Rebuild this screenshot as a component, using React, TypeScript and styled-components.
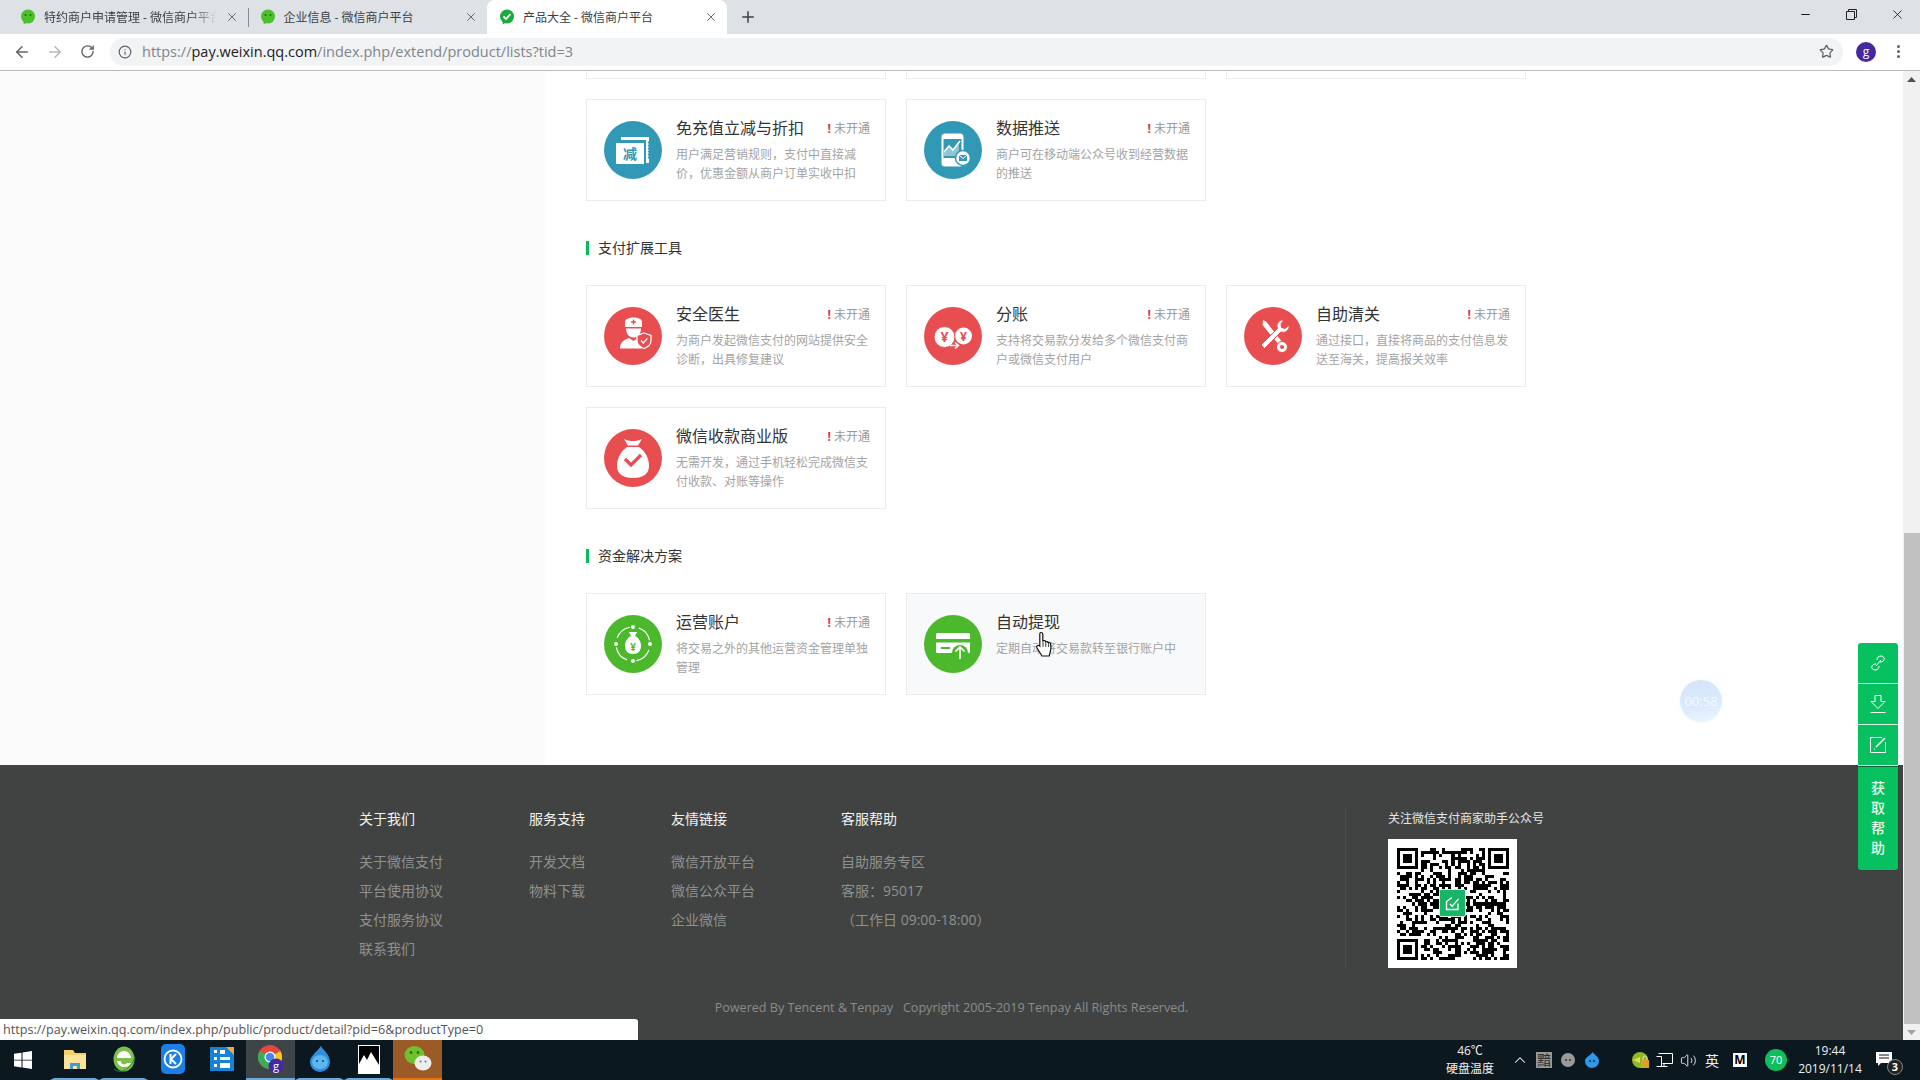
import { ReactNode } from 'react';
import styled, { createGlobalStyle } from 'styled-components';
import { ArrowLeft, ArrowRight, ChevronUp, Info, Minus, Plus, RotateCw, Star, Volume2, X } from 'lucide-react';

const FONT = '"Open Sans", "Noto Sans CJK SC", sans-serif';
const BLUE = '#3199b6';
const RED = '#e84d50';
const GREEN = '#4cb82c';

/* ---------- icons ---------- */

function Disc({ color, children }: { color: string; children: ReactNode }) {
  return (
    <svg width="58" height="58" viewBox="0 0 58 58" style={{ flexShrink: 0 }}>
      <circle cx="29" cy="29" r="29" fill={color} />
      {children}
    </svg>
  );
}

const ReduceIcon = (
  <Disc color={BLUE}>
    <path d="M17 16h28v4l-1.500 1.500 1.500 1.500-1.500 1.500 1.500 1.500-1.500 1.500 1.500 1.500-1.500 1.500 1.500 1.500-1.500 1.500 1.500 1.500-1.500 1.500 1.500 1.500v4h-3V19H17z" fill="#fff" />
    <rect x="12" y="22" width="28" height="21" fill="#fff" />
    <text x="26" y="38" fontSize="14" fontWeight="700" textAnchor="middle" fill={BLUE} fontFamily={FONT}>减</text>
  </Disc>
);

const PushIcon = (
  <Disc color={BLUE}>
    <rect x="18.500" y="13.500" width="20" height="31" rx="2.500" fill={BLUE} stroke="#fff" strokeWidth="2" />
    <rect x="19" y="14" width="19" height="4" fill="#fff" />
    <rect x="19" y="37" width="19" height="7" fill="#fff" />
    <path d="M20 35v-5l5-5 4 4 6-8v14z" fill="#fff" opacity=".45" />
    <path d="M20 31l5-6 4 4 7-9" fill="none" stroke="#fff" strokeWidth="1.600" />
    <circle cx="39" cy="37" r="7.500" fill="#fff" stroke={BLUE} strokeWidth="1.500" />
    <rect x="35" y="34" width="8" height="6" fill={BLUE} />
    <path d="M35 34l4 3.500 4-3.500" fill="none" stroke="#fff" strokeWidth="1" />
  </Disc>
);

const DoctorIcon = (
  <Disc color={RED}>
    <path d="M21 20v-5c0-3 4-4.500 8.500-4.500S38 12 38 15v5z" fill="#fff" />
    <path d="M29.500 12.500v5M27 15h5" stroke={RED} strokeWidth="1.400" />
    <path d="M22 21.500h15c0 5-3 9-7.500 9s-7.500-4-7.500-9z" fill="#fff" />
    <path d="M16 41.500c0-6 4-9 9-10.500l4.500 3 4.500-3c1.500.5 3 1.200 4 2v8.500z" fill="#fff" />
    <path d="M40 26l7 2.500v5c0 4-3 6.500-7 8-4-1.500-7-4-7-8v-5z" fill={RED} stroke="#fff" strokeWidth="1.300" />
    <path d="M37 33.500l2.300 2.500 4-4.500" fill="none" stroke="#fff" strokeWidth="1.300" />
  </Disc>
);

const SplitIcon = (
  <Disc color={RED}>
    <circle cx="39.500" cy="29" r="8.500" fill="#fff" />
    <circle cx="20.500" cy="30" r="10.500" fill="#fff" stroke={RED} strokeWidth="1" />
    <text x="20.500" y="35" fontSize="14" fontWeight="700" textAnchor="middle" fill={RED} fontFamily={FONT}>¥</text>
    <text x="39.500" y="33.500" fontSize="12" fontWeight="700" textAnchor="middle" fill={RED} fontFamily={FONT}>¥</text>
    <path d="M26 38.500h8M31 35.500l3.500 3-3.500 3" fill="none" stroke="#fff" strokeWidth="1.500" />
  </Disc>
);

const CustomsIcon = (
  <Disc color={RED}>
    <path d="M19 13l3 1.500 17 21.500-3 3-17.500-21z" fill="#fff" />
    <path d="M40 13a6 6 0 0 0-6.500 8.500L17 38l3.500 3.500L37 25a6 6 0 0 0 8-7l-4 3.500-3.500-1-.5-3.500z" fill="#fff" stroke={RED} strokeWidth="1" />
    <circle cx="38" cy="40" r="5.500" fill="#fff" stroke={RED} strokeWidth="1" />
    <circle cx="38" cy="40" r="2" fill={RED} />
  </Disc>
);

const BagIcon = (
  <Disc color={RED}>
    <path d="M20 10c3 1.500 6 2 9 2s6-.5 9-2l-4 6.500h-10z" fill="#fff" />
    <path d="M23 18h12c6 4 10 11 10 19 0 8-6 12-16 12s-16-4-16-12c0-8 4-15 10-19z" fill="#fff" />
    <path d="M21 30l6 6 10-10" fill="none" stroke={RED} strokeWidth="3.200" />
  </Disc>
);

const OperateIcon = (
  <Disc color={GREEN}>
    <circle cx="29" cy="29" r="17" fill="none" stroke="#fff" strokeWidth="1.200" strokeDasharray="17 9.700" transform="rotate(-70 29 29)" />
    <circle cx="29" cy="12" r="2" fill="#fff" />
    <circle cx="12" cy="29" r="2" fill="#fff" />
    <circle cx="46" cy="29" r="2" fill="#fff" />
    <circle cx="29" cy="46" r="2" fill="#fff" />
    <path d="M25 17h8l-2 4c4 2 6 6 6 10 0 5-3 8-8 8s-8-3-8-8c0-4 2-8 6-10z" fill="#fff" />
    <text x="29" y="36" fontSize="10" fontWeight="700" textAnchor="middle" fill={GREEN} fontFamily={FONT}>¥</text>
  </Disc>
);

const WithdrawIcon = (
  <Disc color={GREEN}>
    <rect x="12" y="18" width="34" height="20" rx="1.500" fill="#fff" />
    <rect x="12" y="24" width="34" height="3.500" fill={GREEN} />
    <rect x="17" y="32" width="9" height="2" fill={GREEN} />
    <circle cx="36" cy="38" r="8" fill={GREEN} />
    <path d="M36 44v-12M31.500 36.500l4.500-4.500 4.500 4.500" fill="none" stroke="#fff" strokeWidth="1.600" />
  </Disc>
);

function HandCursor() {
  return (
    <svg width="20" height="26" viewBox="0 0 20 26">
      <path
        d="M6 1.500c1 0 1.800.8 1.800 1.800V10l1-.3c1-.2 1.800.2 2 1 1-.4 2-.1 2.300.8 1-.4 2.200 0 2.400 1 .8 3 .6 6.500-.5 9.500l-.8 3H7l-5-8c-.6-1-.4-2 .4-2.500.8-.5 1.600-.2 2.400.6V3.300c0-1 .3-1.800 1.200-1.800z"
        fill="#fff"
        stroke="#111"
        strokeWidth="1.200"
      />
      <path d="M8 11v5M10.800 11v5M13.600 12v4" stroke="#111" strokeWidth=".8" />
    </svg>
  );
}

function WechatFavicon({ check }: { check?: boolean }) {
  return (
    <svg width="16" height="16" viewBox="0 0 16 16">
      <circle cx="8" cy="7.500" r="7" fill={check ? '#1aab3b' : '#4cc02b'} />
      <path d="M4 12l-.5 3.500L8 13z" fill={check ? '#1aab3b' : '#4cc02b'} />
      {check ? (
        <path d="M4.500 7.500l2.500 2.500 4.500-5" fill="none" stroke="#fff" strokeWidth="1.800" />
      ) : (
        <g fill="#1f6b12">
          <circle cx="5.500" cy="6" r="1" />
          <circle cx="10.500" cy="6" r="1" />
        </g>
      )}
    </svg>
  );
}

/* pseudo random QR modules, with the three finder squares drawn on top */
function qrPath() {
  const size = 37;
  let seed = 20191114;
  let d = '';
  const inFinder = (x: number, y: number) => (x < 8 && y < 8) || (x > 28 && y < 8) || (x < 8 && y > 28);
  for (let y = 0; y < size; y++) {
    for (let x = 0; x < size; x++) {
      seed = (seed * 1103515245 + 12345) & 0x7fffffff;
      if (!inFinder(x, y) && (seed >> 16) % 100 < 52) d += `M${x} ${y}h1v1h-1z`;
    }
  }
  [
    [0, 0],
    [30, 0],
    [0, 30],
  ].forEach(([x, y]) => {
    d += `M${x} ${y}h7v7h-7zM${x + 1} ${y + 1}v5h5v-5zM${x + 2} ${y + 2}h3v3h-3z`;
  });
  return d;
}

function QrCode() {
  return (
    <svg width="112" height="112" viewBox="0 0 37 37" shapeRendering="crispEdges">
      <path d={qrPath()} fill="#000" fillRule="evenodd" />
    </svg>
  );
}

/* ---------- data ---------- */

type Product = { title: string; desc: string; icon: ReactNode; closed?: boolean };

const PROMO: Product[] = [
  { title: '免充值立减与折扣', desc: '用户满足营销规则\uFF0C支付中直接减价\uFF0C优惠金额从商户订单实收中扣', icon: ReduceIcon, closed: true },
  { title: '数据推送', desc: '商户可在移动端公众号收到经营数据的推送', icon: PushIcon, closed: true },
];

const TOOLS: Product[] = [
  { title: '安全医生', desc: '为商户发起微信支付的网站提供安全诊断\uFF0C出具修复建议', icon: DoctorIcon, closed: true },
  { title: '分账', desc: '支持将交易款分发给多个微信支付商户或微信支付用户', icon: SplitIcon, closed: true },
  { title: '自助清关', desc: '通过接口\uFF0C直接将商品的支付信息发送至海关\uFF0C提高报关效率', icon: CustomsIcon, closed: true },
  { title: '微信收款商业版', desc: '无需开发\uFF0C通过手机轻松完成微信支付收款\u3001对账等操作', icon: BagIcon, closed: true },
];

const FOOTER_COLUMNS = [
  { width: 170, title: '关于我们', links: ['关于微信支付', '平台使用协议', '支付服务协议', '联系我们'] },
  { width: 142, title: '服务支持', links: ['开发文档', '物料下载'] },
  { width: 170, title: '友情链接', links: ['微信开放平台', '微信公众平台', '企业微信'] },
  { width: 504, title: '客服帮助', links: ['自助服务专区', '客服\uFF1A95017', '\uFF08工作日 09:00-18:00\uFF09'] },
];

/* ---------- component ---------- */

function ProductCard({ product, hovered, children }: { product: Product; hovered?: boolean; children?: ReactNode }) {
  return (
    <Card $hovered={hovered}>
      {product.icon}
      <CardBody>
        <CardHead>
          <CardTitle>{product.title}</CardTitle>
          {product.closed && (
            <Status>
              <b>!</b>未开通
            </Status>
          )}
        </CardHead>
        <CardDesc>{product.desc}</CardDesc>
      </CardBody>
      {children}
    </Card>
  );
}

function App() {
  return (
    <Screen>
      <GlobalStyle />

      <TabStrip>
        <Tab>
          <WechatFavicon />
          <TabTitle $fade>特约商户申请管理 - 微信商户平台</TabTitle>
          <X size={14} strokeWidth={1.600} color="#5f6368" />
        </Tab>
        <Tab $divider>
          <WechatFavicon />
          <TabTitle>企业信息 - 微信商户平台</TabTitle>
          <X size={14} strokeWidth={1.600} color="#5f6368" />
        </Tab>
        <Tab $active>
          <WechatFavicon check />
          <TabTitle>产品大全 - 微信商户平台</TabTitle>
          <X size={14} strokeWidth={1.600} color="#5f6368" />
        </Tab>
        <NewTab>
          <Plus size={18} color="#3c4043" />
        </NewTab>
        <WindowControls>
          <WindowButton>
            <Minus size={13} strokeWidth={1.800} color="#111" />
          </WindowButton>
          <WindowButton>
            <svg width="11" height="11" viewBox="0 0 11 11" fill="none" stroke="#222">
              <path d="M.5 2.500h8v8h-8zM2.500 2.500v-2h8v8h-2" />
            </svg>
          </WindowButton>
          <WindowButton>
            <X size={15} strokeWidth={1.300} color="#111" />
          </WindowButton>
        </WindowControls>
      </TabStrip>

      <Toolbar>
        <NavButton>
          <ArrowLeft size={18} color="#5f6368" strokeWidth={2} />
        </NavButton>
        <NavButton>
          <ArrowRight size={18} color="#b4b7ba" strokeWidth={2} />
        </NavButton>
        <NavButton>
          <RotateCw size={15} color="#5f6368" strokeWidth={2.200} />
        </NavButton>
        <Omnibox>
          <Info size={14} color="#5f6368" />
          <Url>
            https://<strong>pay.weixin.qq.com</strong>/index.php/extend/product/lists?tid=3
          </Url>
          <Star size={15} color="#5f6368" strokeWidth={2} />
        </Omnibox>
        <Avatar>g</Avatar>
        <Kebab>
          <i />
          <i />
          <i />
        </Kebab>
      </Toolbar>

      <PageRow>
        <PageScroll>
          <Main>
            <Sidebar />
            <Panel>
              <CutGrid>
                <Card />
                <Card />
                <Card />
              </CutGrid>
              <CardGrid>
                {PROMO.map((p) => (
                  <ProductCard key={p.title} product={p} />
                ))}
              </CardGrid>

              <SectionTitle>支付扩展工具</SectionTitle>
              <CardGrid>
                {TOOLS.map((p) => (
                  <ProductCard key={p.title} product={p} />
                ))}
              </CardGrid>

              <SectionTitle>资金解决方案</SectionTitle>
              <CardGrid>
                <ProductCard
                  product={{ title: '运营账户', desc: '将交易之外的其他运营资金管理单独管理', icon: OperateIcon, closed: true }}
                />
                <ProductCard
                  hovered
                  product={{ title: '自动提现', desc: '定期自动将交易款转至银行账户中', icon: WithdrawIcon }}
                >
                  <CursorSpot>
                    <HandCursor />
                  </CursorSpot>
                </ProductCard>
              </CardGrid>
            </Panel>
          </Main>

          <Footer>
            <FooterTop>
              {FOOTER_COLUMNS.map((col) => (
                <FooterColumn key={col.title} $width={col.width}>
                  <FooterHeading>{col.title}</FooterHeading>
                  <FooterLinks>
                    {col.links.map((l) => (
                      <li key={l}>{l}</li>
                    ))}
                  </FooterLinks>
                </FooterColumn>
              ))}
              <QrBlock>
                <QrTitle>关注微信支付商家助手公众号</QrTitle>
                <QrBox>
                  <QrCode />
                  <QrLogo>
                    <svg width="15" height="15" viewBox="0 0 15 15" fill="none" stroke="#fff" strokeWidth="1.300">
                      <path d="M7 1.500L1.500 5.500V13.500H13V7.500" />
                      <path d="M5 8l2.200 2.200L13.500 3" />
                    </svg>
                  </QrLogo>
                </QrBox>
              </QrBlock>
            </FooterTop>
            <Copyright>Powered By Tencent &amp; Tenpay &nbsp; Copyright 2005-2019 Tenpay All Rights Reserved.</Copyright>
          </Footer>
        </PageScroll>

        <Scrollbar>
          <ScrollArrow>
            <svg width="9" height="5" viewBox="0 0 9 5">
              <path d="M0 5l4.500-5L9 5z" fill="#505050" />
            </svg>
          </ScrollArrow>
          <ScrollTrack>
            <ScrollThumb />
          </ScrollTrack>
          <ScrollArrow>
            <svg width="9" height="5" viewBox="0 0 9 5">
              <path d="M0 0l4.500 5L9 0z" fill="#a3a3a3" />
            </svg>
          </ScrollArrow>
        </Scrollbar>
      </PageRow>

      <Taskbar>
        <StartButton>
          <svg width="18" height="18" viewBox="0 0 18 18" fill="#fff">
            <path d="M0 2.800l7.500-1.100v7H0zM8.500 1.500L18 0v8.700H8.500zM0 9.500h7.500v6.900L0 15.300zM8.500 9.500H18V18l-9.500-1.400z" />
          </svg>
        </StartButton>
        <TaskItem $underline="#6aa9dc">
          <svg width="24" height="24" viewBox="0 0 24 24">
            <path d="M1 3h9l2 3h11v16H1z" fill="#f5cf6b" />
            <rect x="1" y="8" width="22" height="14" fill="#fce39a" />
            <path d="M7 22v-6h10v6h-3v-3h-4v3z" fill="#3aa0d8" />
          </svg>
        </TaskItem>
        <TaskItem $underline="#6aa9dc">
          <svg width="26" height="30" viewBox="0 0 26 30">
            <ellipse cx="13" cy="15" rx="10.500" ry="12.500" fill="#7cc04a" />
            <path d="M6 14h14c0-4-3-7-7-7s-7 3-7 7zM6 17c1 4 4 6 7 6 3 0 6-1 7-4h-4c-1 1-2 1.500-3 1.500s-3-1-3.500-3.500z" fill="#fff" />
            <path d="M3 25c6 5 16 2 21-12" fill="none" stroke="#2a8a2a" strokeWidth="1" />
          </svg>
        </TaskItem>
        <TaskItem>
          <svg width="24" height="32" viewBox="0 0 24 32">
            <rect y="1" width="24" height="30" rx="5" fill="#1a7fe6" />
            <circle cx="12" cy="16" r="8.500" fill="none" stroke="#fff" strokeWidth="1.800" />
            <path d="M9.500 11v10M15 11l-5 5 5 5" fill="none" stroke="#fff" strokeWidth="2" />
          </svg>
        </TaskItem>
        <TaskItem>
          <svg width="24" height="24" viewBox="0 0 24 24">
            <rect width="24" height="24" fill="#1583d8" />
            <path d="M16 0h8v8z" fill="#f0a64a" />
            <path d="M4 3h3v3H4zM4 10h3v3H4zM4 17h3v3H4zM10 10h10v3H10zM10 16h10v5H10zM10 3h5v4H10z" fill="#fff" />
          </svg>
        </TaskItem>
        <TaskItem $active $underline="#6aa9dc">
          <svg width="26" height="30" viewBox="0 0 26 30">
            <circle cx="12" cy="13" r="12" fill="#e3493b" />
            <path d="M12 13L22.400 7A12 12 0 0 1 12 25z" fill="#f8c61c" />
            <path d="M12 13v12A12 12 0 0 1 1.600 7z" fill="#3bab55" />
            <circle cx="12" cy="13" r="5.500" fill="#fff" />
            <circle cx="12" cy="13" r="4.300" fill="#4688f1" />
            <circle cx="18" cy="22" r="7.500" fill="#4527a0" />
            <text x="18" y="26" fontSize="11" textAnchor="middle" fill="#fff" fontFamily={FONT}>g</text>
          </svg>
        </TaskItem>
        <TaskItem $underline="#6aa9dc">
          <svg width="24" height="28" viewBox="0 0 24 28">
            <path d="M13 1c1 3 9 8 9 16a10 10 0 0 1-20 0C2 11 8 8 13 1z" fill="#2f8fdc" />
            <ellipse cx="12" cy="17" rx="8" ry="7" fill="#5cb6f0" />
            <circle cx="9" cy="16" r="1" fill="#15467a" />
            <circle cx="15" cy="16" r="1" fill="#15467a" />
          </svg>
        </TaskItem>
        <TaskItem $underline="#6aa9dc">
          <svg width="22" height="29" viewBox="0 0 22 29">
            <rect x=".5" y=".5" width="21" height="28" fill="#000" stroke="#fff" />
            <path d="M1 28V19l5-9 3 5 4-8 8 13v8z" fill="#fff" />
          </svg>
        </TaskItem>
        <TaskItem $wechat $underline="#e6730e">
          <svg width="28" height="28" viewBox="0 0 28 28">
            <ellipse cx="10.500" cy="10" rx="10" ry="9" fill="#6fc22b" />
            <circle cx="7" cy="7.500" r="1.300" fill="#245a10" />
            <circle cx="14" cy="7.500" r="1.300" fill="#245a10" />
            <ellipse cx="19" cy="18" rx="8.500" ry="7.500" fill="#eee" />
            <circle cx="16.500" cy="16.500" r="1" fill="#777" />
            <circle cx="21.500" cy="16.500" r="1" fill="#777" />
          </svg>
        </TaskItem>

        <Tray>
          <TrayClock $width={60}>
            <span>46℃</span>
            <span>硬盘温度</span>
          </TrayClock>
          <TraySlot $left={8}>
            <ChevronUp size={18} color="#fff" strokeWidth={1.400} />
          </TraySlot>
          <TraySlot>
            <DotBox>黯</DotBox>
          </TraySlot>
          <TraySlot>
            <svg width="16" height="16" viewBox="0 0 16 16">
              <circle cx="8" cy="8" r="7" fill="#9a9a9a" />
              <circle cx="6" cy="8" r=".9" fill="#222" />
              <circle cx="10" cy="8" r=".9" fill="#222" />
            </svg>
          </TraySlot>
          <TraySlot>
            <svg width="16" height="16" viewBox="0 0 16 16">
              <path d="M9 0c0 2 6 4 6 9a7 7 0 0 1-14 0c0-4 5-5 8-9z" fill="#2f98e8" />
              <circle cx="6" cy="9" r=".9" fill="#123" />
              <circle cx="10" cy="9" r=".9" fill="#123" />
            </svg>
          </TraySlot>
          <TraySlot $left={24}>
            <svg width="17" height="17" viewBox="0 0 17 17">
              <circle cx="8" cy="8" r="8" fill="#8db82a" />
              <path d="M1 8l7-3v6z" fill="#f2d94a" />
              <rect x="9" y="8" width="8" height="8" fill="#d9a32a" />
              <path d="M11 8V6a2 2 0 0 1 4 0v2" fill="none" stroke="#f0e0a0" />
            </svg>
          </TraySlot>
          <TraySlot>
            <svg width="17" height="16" viewBox="0 0 17 16" fill="none" stroke="#fff">
              <path d="M2.500 1.500h14v10h-10M.5 4.500h5v10h-5M8 11.500v3h-2M5.500 14.500h6" />
            </svg>
          </TraySlot>
          <TraySlot>
            <Volume2 size={17} color="#fff" strokeWidth={1.200} />
          </TraySlot>
          <TraySlot>
            <TrayText>英</TrayText>
          </TraySlot>
          <TraySlot $left={4}>
            <MBadge>M</MBadge>
          </TraySlot>
          <TraySlot $left={12}>
            <ScoreBadge>70</ScoreBadge>
          </TraySlot>
          <TrayClock $width={70} $left={7}>
            <span>19:44</span>
            <span>2019/11/14</span>
          </TrayClock>
          <TraySlot $left={10}>
            <NotifyIcon>
              <svg width="16" height="14" viewBox="0 0 16 14">
                <path d="M0 0h16v11H5l-3 3v-3H0z" fill="#fff" />
                <path d="M3 3h10M3 6h10" stroke="#111" />
              </svg>
              <NotifyCount>3</NotifyCount>
            </NotifyIcon>
          </TraySlot>
        </Tray>
      </Taskbar>

      <TimerBubble>00:58</TimerBubble>

      <FloatBar>
        <FloatButton>
          <svg width="16" height="16" viewBox="0 0 16 16" fill="none" stroke="#fff" strokeWidth="1">
            <path d="M7 5c0-2 1-4 4-4 2 0 4 2 3 4-1 2-3 2-4 2M9 11c0 2-1 4-4 4-2 0-4-2-3-4 1-2 3-2 4-2M6 11l5-6" />
          </svg>
        </FloatButton>
        <FloatButton>
          <svg width="16" height="18" viewBox="0 0 16 18" fill="none" stroke="#fff" strokeWidth="1">
            <path d="M5 .5h6v6h4l-7 7-7-7h4zM.5 17.500h15" />
          </svg>
        </FloatButton>
        <FloatButton>
          <svg width="16" height="16" viewBox="0 0 16 16" fill="none" stroke="#fff" strokeWidth="1">
            <path d="M12 .5H.5v15h15V5" />
            <path d="M6 10l9-9" strokeWidth="1.600" />
            <path d="M4 12h1" />
          </svg>
        </FloatButton>
        <HelpButton>
          <span>获</span>
          <span>取</span>
          <span>帮</span>
          <span>助</span>
        </HelpButton>
      </FloatBar>

      <StatusBubble>https://pay.weixin.qq.com/index.php/public/product/detail?pid=6&amp;productType=0</StatusBubble>
    </Screen>
  );
}

/* ---------- styles ---------- */

const GlobalStyle = createGlobalStyle`
  html, body {
    margin: 0;
    height: 100%;
    overflow: hidden;
  }
  body {
    font-family: ${FONT};
    background: #fff;
  }
  #root {
    height: 100%;
  }
`;

const Screen = styled.div`
  position: relative;
  display: flex;
  flex-direction: column;
  height: 100vh;
  overflow: hidden;
`;

const TabStrip = styled.div`
  display: flex;
  height: 34px;
  flex-shrink: 0;
  padding-left: 8px;
  background: #dee1e6;
`;

const Tab = styled.div<{ $active?: boolean; $divider?: boolean }>`
  display: flex;
  align-items: center;
  gap: 8px;
  width: 239.5px;
  padding: 0 9px 0 12px;
  box-sizing: border-box;
  border-radius: 8px 8px 0 0;
  background: ${(p) => (p.$active ? '#fff' : 'transparent')};
  position: relative;

  ${(p) =>
    p.$divider &&
    `&::before {
      content: '';
      position: absolute;
      left: 0;
      top: 8px;
      bottom: 7px;
      width: 1px;
      background: #888b90;
    }`}
`;

const TabTitle = styled.div<{ $fade?: boolean }>`
  flex: 1;
  min-width: 0;
  overflow: hidden;
  white-space: nowrap;
  font-size: 12px;
  color: #3c4043;
  ${(p) => p.$fade && 'mask-image: linear-gradient(90deg, #000 85%, transparent 100%);'}
`;

const NewTab = styled.div`
  display: flex;
  align-items: center;
  margin-left: 12px;
`;

const WindowControls = styled.div`
  display: flex;
  margin-left: auto;
`;

const WindowButton = styled.div`
  display: flex;
  align-items: center;
  justify-content: center;
  width: 46px;
  height: 28px;
`;

const Toolbar = styled.div`
  display: flex;
  align-items: center;
  height: 37px;
  flex-shrink: 0;
  box-sizing: border-box;
  padding: 0 10px 1px 5px;
  background: #fff;
  border-bottom: 1px solid #b8babc;
`;

const NavButton = styled.div`
  display: flex;
  align-items: center;
  justify-content: center;
  width: 33px;
`;

const Omnibox = styled.div`
  display: flex;
  align-items: center;
  flex: 1;
  height: 28px;
  margin-left: 6px;
  padding: 0 9px 0 8px;
  border-radius: 14px;
  background: #f1f3f4;
`;

const Url = styled.div`
  flex: 1;
  margin-left: 10px;
  font-size: 14.500px;
  color: #80868b;

  strong {
    font-weight: 400;
    color: #202124;
  }
`;

const Avatar = styled.div`
  display: flex;
  align-items: center;
  justify-content: center;
  width: 20px;
  height: 20px;
  margin: 0 10px 0 13px;
  border-radius: 50%;
  background: #4527a0;
  color: #fff;
  font-size: 12px;
`;

const Kebab = styled.div`
  display: flex;
  flex-direction: column;
  align-items: center;
  gap: 2px;
  width: 24px;

  i {
    width: 3px;
    height: 3px;
    border-radius: 50%;
    background: #5f6368;
  }
`;

const PageRow = styled.div`
  display: flex;
  flex: 1;
  min-height: 0;
`;

const PageScroll = styled.div`
  display: flex;
  flex-direction: column;
  flex: 1;
  min-width: 0;
  overflow: hidden;
`;

const Main = styled.div`
  display: flex;
  height: 694px;
  flex-shrink: 0;
`;

const Sidebar = styled.div`
  width: 545px;
  flex-shrink: 0;
  background: #fbfbfb;
`;

const Panel = styled.div`
  flex: 1;
  padding-left: 41px;
  background: #fff;
`;

const CardGrid = styled.div`
  display: grid;
  grid-template-columns: repeat(3, 300px);
  gap: 20px;
`;

const CutGrid = styled(CardGrid)`
  margin-top: -94px;
  margin-bottom: 20px;
`;

const Card = styled.div<{ $hovered?: boolean }>`
  position: relative;
  display: flex;
  align-items: flex-start;
  gap: 14px;
  width: 300px;
  height: 102px;
  box-sizing: border-box;
  padding: 21px 15px 0 17px;
  border: 1px solid #ebebeb;
  background: ${(p) => (p.$hovered ? '#f8f9fa' : '#fff')};
`;

const CardBody = styled.div`
  flex: 1;
  min-width: 0;
  margin-top: -4px;
`;

const CardHead = styled.div`
  display: flex;
  align-items: center;
  justify-content: space-between;
  height: 22px;
`;

const CardTitle = styled.div`
  font-size: 16px;
  line-height: 22px;
  color: #333;
`;

const Status = styled.div`
  font-size: 12px;
  color: #999;

  b {
    margin-right: 3px;
    color: #e0304c;
    font-weight: 700;
  }
`;

const CardDesc = styled.div`
  margin-top: 5.500px;
  font-size: 12px;
  line-height: 19px;
  color: #a3a3a3;
`;

const CursorSpot = styled.div`
  position: absolute;
  left: 128px;
  top: 37px;
`;

const SectionTitle = styled.div`
  height: 14px;
  margin: 40px 0 30px;
  padding-left: 9px;
  border-left: 3px solid #09bb5c;
  font-size: 14px;
  line-height: 14px;
  color: #333;
`;

const Footer = styled.footer`
  flex: 1;
  padding-top: 44px;
  background: #404342;
`;

const FooterTop = styled.div`
  display: flex;
  height: 160px;
  padding-left: 359px;
`;

const FooterColumn = styled.div<{ $width: number }>`
  width: ${(p) => p.$width}px;
  flex-shrink: 0;
`;

const FooterHeading = styled.div`
  font-size: 14px;
  line-height: 20px;
  color: #f2f2f2;
`;

const FooterLinks = styled.ul`
  list-style: none;
  margin: 18px 0 0;
  padding: 0;
  font-size: 14px;
  line-height: 29px;
  color: #8f9190;
`;

const QrBlock = styled.div`
  display: flex;
  flex-direction: column;
  align-items: flex-start;
  height: 160px;
  padding-left: 42px;
  border-left: 1px solid #4b4e4d;
`;

const QrTitle = styled.div`
  margin-top: 1px;
  font-size: 12px;
  line-height: 18px;
  color: #e6e6e6;
`;

const QrBox = styled.div`
  position: relative;
  display: flex;
  align-items: center;
  justify-content: center;
  width: 129px;
  height: 129px;
  margin-top: 11px;
  background: #fff;
`;

const QrLogo = styled.div`
  position: absolute;
  left: 51px;
  top: 50px;
  display: flex;
  align-items: center;
  justify-content: center;
  width: 27px;
  height: 28px;
  border: 1px solid #d5efe0;
  border-radius: 2px;
  box-sizing: border-box;
  background: #18b566;
`;

const Copyright = styled.div`
  margin-top: 29px;
  text-align: center;
  font-size: 12.600px;
  line-height: 20px;
  color: #8a8c8b;
`;

const Scrollbar = styled.div`
  display: flex;
  flex-direction: column;
  width: 17px;
  flex-shrink: 0;
  background: #f1f1f1;
`;

const ScrollArrow = styled.div`
  display: flex;
  align-items: center;
  justify-content: center;
  height: 17px;
  flex-shrink: 0;
`;

const ScrollTrack = styled.div`
  flex: 1;
`;

const ScrollThumb = styled.div`
  height: 491px;
  margin: 445px 0 0 1px;
  background: #c1c1c1;
`;

const Taskbar = styled.div`
  display: flex;
  height: 40px;
  flex-shrink: 0;
  background: #0b1820;
`;

const StartButton = styled.div`
  display: flex;
  align-items: center;
  justify-content: center;
  width: 50px;
  padding-right: 4px;
  box-sizing: border-box;
`;

const TaskItem = styled.div<{ $active?: boolean; $wechat?: boolean; $underline?: string }>`
  display: flex;
  align-items: center;
  justify-content: center;
  width: 49px;
  box-sizing: border-box;
  border-bottom: 2px solid ${(p) => p.$underline ?? 'transparent'};
  border-left: 4px solid transparent;
  border-right: 4px solid transparent;
  ${(p) => p.$active && 'background: #3f4449; border-left: 0; border-right: 0;'}
  ${(p) => p.$wechat && 'background: #9c5a26; border-left: 0; border-right: 0;'}
`;

const Tray = styled.div`
  display: flex;
  align-items: center;
  margin-left: auto;
  padding-right: 21px;
`;

const TraySlot = styled.div<{ $left?: number }>`
  display: flex;
  align-items: center;
  justify-content: center;
  width: 24px;
  margin-left: ${(p) => p.$left ?? 0}px;
`;

const TrayClock = styled.div<{ $width: number; $left?: number }>`
  display: flex;
  flex-direction: column;
  align-items: center;
  width: ${(p) => p.$width}px;
  margin-left: ${(p) => p.$left ?? 0}px;
  font-size: 12px;
  line-height: 18px;
  color: #f0f0f0;
  white-space: nowrap;
`;

const TrayText = styled.div`
  font-size: 14px;
  color: #f0f0f0;
`;

const DotBox = styled.div`
  width: 16px;
  height: 16px;
  background: #9a9a9a;
  color: #2a2a2a;
  font-size: 14px;
  line-height: 16px;
  text-align: center;
`;

const MBadge = styled.div`
  width: 14px;
  height: 14px;
  background: #fff;
  color: #000;
  font-size: 12px;
  font-weight: 700;
  line-height: 14px;
  text-align: center;
`;

const ScoreBadge = styled.div`
  width: 22px;
  height: 22px;
  border-radius: 50%;
  background: #0fbd5f;
  color: #fff;
  font-size: 11px;
  line-height: 22px;
  text-align: center;
`;

const NotifyIcon = styled.div`
  position: relative;
  width: 22px;
  height: 22px;
`;

const NotifyCount = styled.div`
  position: absolute;
  right: -5px;
  bottom: -4px;
  width: 16px;
  height: 16px;
  box-sizing: border-box;
  border: 1px solid #888;
  border-radius: 50%;
  background: #222;
  color: #fff;
  font-size: 11px;
  font-weight: 700;
  line-height: 14px;
  text-align: center;
`;

const TimerBubble = styled.div`
  position: absolute;
  left: 1680px;
  top: 680px;
  width: 42px;
  height: 42px;
  border-radius: 50%;
  background: linear-gradient(170deg, #d5e4fa 0%, #dceafc 60%, #ebf6ff 100%);
  box-shadow: 0 0 4px #f0f5fc;
  color: #f4f9ff;
  font-size: 13px;
  line-height: 42px;
  text-align: center;
`;

const FloatBar = styled.div`
  position: absolute;
  right: 22px;
  top: 643px;
  display: flex;
  flex-direction: column;
  width: 40px;
  border-radius: 3px;
  overflow: hidden;
  background: #07c160;
`;

const FloatButton = styled.div`
  display: flex;
  align-items: center;
  justify-content: center;
  height: 40px;
  border-bottom: 1px solid #d6f5e3;
`;

const HelpButton = styled.div`
  display: flex;
  flex-direction: column;
  align-items: center;
  height: 104px;
  box-sizing: border-box;
  padding-top: 11px;
  border-top: 1px solid #1f5c3a;
  color: #e8fbf0;
  font-size: 14px;
  font-weight: 500;
  line-height: 20px;
`;

const StatusBubble = styled.div`
  position: absolute;
  left: 0;
  bottom: 40px;
  width: 638px;
  height: 21px;
  box-sizing: border-box;
  padding-left: 3px;
  border-radius: 0 3px 0 0;
  background: #fff;
  color: #555;
  font-size: 12.600px;
  line-height: 21px;
  white-space: nowrap;
`;

export default App;
